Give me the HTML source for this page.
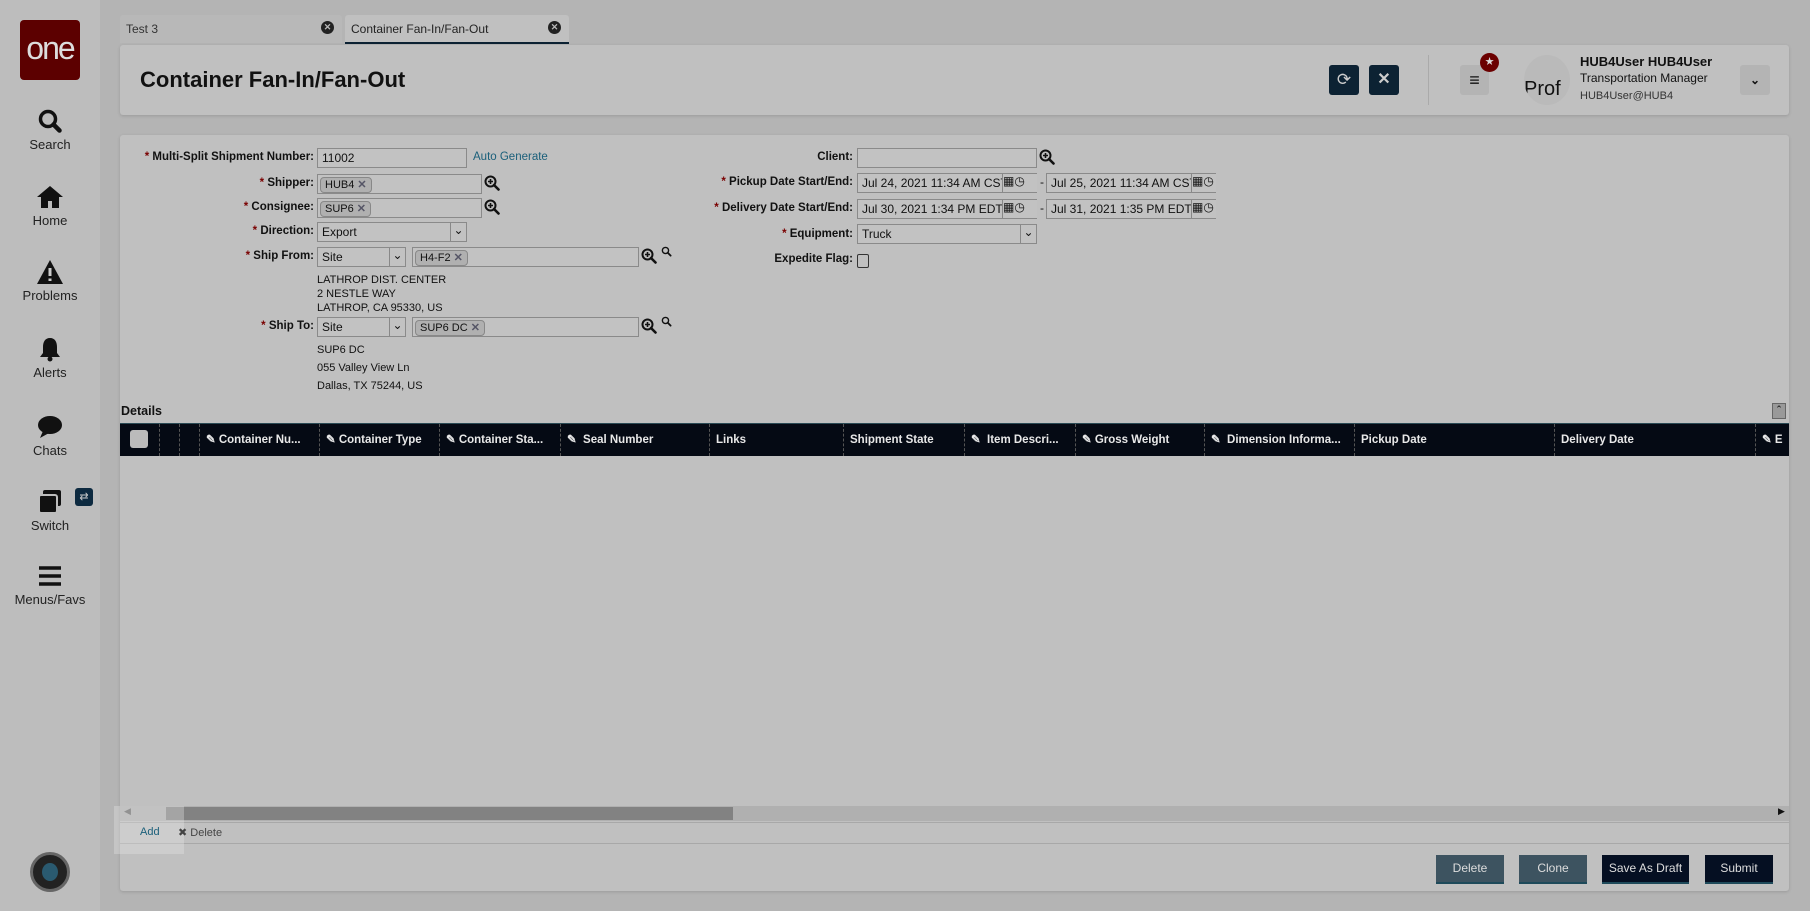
<!DOCTYPE html>
<html><head><meta charset="utf-8"><style>
*{box-sizing:border-box;margin:0;padding:0}
body{width:1810px;height:911px;background:#b4b4b4;font-family:"Liberation Sans",sans-serif;font-size:12px;color:#111;position:relative;overflow:hidden}
.a{position:absolute}
.side{left:0;top:0;width:100px;height:911px;background:#bdbdbd}
.nav{left:0;width:100px;text-align:center;font-size:13px;color:#222}
.nav svg{display:block;margin:0 auto 3px}
.panel{background:#c0c0c0;border-radius:3px;box-shadow:0 1px 3px rgba(0,0,0,.15)}
.lbl{text-align:right;font-weight:bold;font-size:11.5px;width:300px}
.lbl b{color:#7a0000}
.in{border:1px solid #8a8a8a;background:#c2c2c2;height:20px;font-size:12px;padding:2px 4px;line-height:15px}
.chip{display:inline-block;border:1px solid #888;border-radius:4px;background:#b0b0b0;padding:0 4px;font-size:11px;line-height:14px;margin-top:1px}
.chip i{font-style:normal;color:#556;font-weight:bold;margin-left:3px}
.th{position:absolute;top:0;height:32px;line-height:32px;color:#e8e8e8;font-weight:bold;font-size:11.5px;border-left:1px dashed #555;padding-left:6px;white-space:nowrap;overflow:hidden}
.btn{height:29px;line-height:27px;text-align:center;color:#ddd;font-size:12px;border-bottom:2px solid #1e4a5a}
</style></head><body>
<svg width="0" height="0" style="position:absolute"><defs>
<symbol id="zp" viewBox="0 0 16 16"><circle cx="6.5" cy="6.5" r="5" fill="none" stroke="#111" stroke-width="2"/><path d="M10 10l4.5 4.5" stroke="#111" stroke-width="2.6" stroke-linecap="round"/><path d="M6.5 4v5M4 6.5h5" stroke="#111" stroke-width="1.6"/></symbol>
<symbol id="zs" viewBox="0 0 16 16"><circle cx="6.5" cy="6.5" r="4.5" fill="none" stroke="#111" stroke-width="2"/><path d="M10 10l4 4" stroke="#111" stroke-width="2.6" stroke-linecap="round"/></symbol>
</defs></svg>
<div class="a side"></div>
<div class="a" style="left:20px;top:20px;width:60px;height:60px;background:#5c0000;border-radius:4px;color:#ddd;font-size:32px;text-align:center;line-height:56px;letter-spacing:-2px">one</div>
<div class="a nav" style="top:108px"><svg width="26" height="26" viewBox="0 0 26 26"><circle cx="11" cy="11" r="7.5" fill="none" stroke="#111" stroke-width="3.5"/><path d="M16.5 16.5l6 6" stroke="#111" stroke-width="4.5" stroke-linecap="round"/></svg>Search</div>
<div class="a nav" style="top:184px"><svg width="28" height="26" viewBox="0 0 28 26"><path d="M14 2L1 13h4v11h7v-7h4v7h7V13h4z" fill="#111"/></svg>Home</div>
<div class="a nav" style="top:259px"><svg width="28" height="26" viewBox="0 0 28 26"><path d="M14 1L1 25h26z" fill="#111"/><path d="M14 9v8M14 19.5v2.5" stroke="#ccc" stroke-width="3"/></svg>Problems</div>
<div class="a nav" style="top:336px"><svg width="26" height="26" viewBox="0 0 26 26"><path d="M13 2c-5 0-7 4-7 9v6l-3 4h20l-3-4v-6c0-5-2-9-7-9z" fill="#111"/><circle cx="13" cy="23" r="2.5" fill="#111"/></svg>Alerts</div>
<div class="a nav" style="top:414px"><svg width="28" height="26" viewBox="0 0 28 26"><ellipse cx="14" cy="11" rx="12" ry="9" fill="#111"/><path d="M7 17l-3 7 9-5z" fill="#111"/></svg>Chats</div>
<div class="a nav" style="top:489px"><svg width="28" height="26" viewBox="0 0 28 26"><rect x="7" y="1" width="18" height="16" rx="2" fill="#111"/><rect x="3" y="6" width="18" height="18" rx="2" fill="#111" stroke="#bdbdbd" stroke-width="2"/></svg>Switch</div>
<div class="a" style="left:75px;top:488px;width:18px;height:18px;background:#0d2a40;border-radius:3px;color:#ccc;font-size:11px;text-align:center;line-height:18px">⇄</div>
<div class="a nav" style="top:563px"><svg width="26" height="26" viewBox="0 0 26 26"><path d="M2 5h22M2 13h22M2 21h22" stroke="#111" stroke-width="3.5"/></svg>Menus/Favs</div>
<div class="a" style="left:30px;top:852px;width:40px;height:40px;border-radius:50%;background:#222;border:3px solid #666"><div style="margin:8px auto;width:16px;height:18px;border-radius:50%;background:#2a5a70"></div></div>

<div class="a" style="left:120px;top:15px;width:222px;height:28px;background:#b8b8b8;border-radius:3px 3px 0 0;padding:7px 6px;font-size:12px;color:#333">Test 3<span style="position:absolute;right:8px;top:6px;width:13px;height:13px;border-radius:50%;background:#222;color:#bbb;font-size:9px;text-align:center;line-height:13px;font-weight:bold">✕</span></div>
<div class="a" style="left:345px;top:15px;width:224px;height:29px;background:#c0c0c0;border-radius:3px 3px 0 0;border-bottom:2px solid #0c2233;padding:7px 6px;font-size:12px;color:#222">Container Fan-In/Fan-Out<span style="position:absolute;right:8px;top:6px;width:13px;height:13px;border-radius:50%;background:#222;color:#bbb;font-size:9px;text-align:center;line-height:13px;font-weight:bold">✕</span></div>

<div class="a panel" style="left:120px;top:45px;width:1669px;height:70px"></div>
<div class="a" style="left:140px;top:67px;font-size:22px;font-weight:bold;color:#111">Container Fan-In/Fan-Out</div>
<div class="a" style="left:1329px;top:65px;width:30px;height:30px;background:#0c2233;border-radius:3px;color:#ccc;text-align:center;line-height:30px;font-size:17px">⟳</div>
<div class="a" style="left:1369px;top:65px;width:30px;height:30px;background:#0c2233;border-radius:3px;color:#ccc;text-align:center;line-height:30px;font-size:16px;font-weight:bold">✕</div>
<div class="a" style="left:1428px;top:55px;width:1px;height:50px;background:#aaa"></div>
<div class="a" style="left:1460px;top:65px;width:29px;height:30px;background:#b4b4b4;border-radius:3px;text-align:center;line-height:30px;font-size:18px;font-weight:bold">≡</div>
<div class="a" style="left:1480px;top:53px;width:19px;height:19px;background:#6b0000;border-radius:50%;color:#ddd;font-size:11px;text-align:center;line-height:19px">★</div>
<div class="a" style="left:1524px;top:55px;width:46px;height:50px;background:#bababa;border-radius:50%;overflow:hidden;font-size:20px;padding-top:23px;color:#111">Prof</div>
<div class="a" style="left:1580px;top:54px;font-size:13px;font-weight:bold;line-height:16px">HUB4User HUB4User<br><span style="font-weight:normal;font-size:12px;line-height:17px">Transportation Manager</span><br><span style="font-weight:normal;font-size:11px;color:#333">HUB4User@HUB4</span></div>
<div class="a" style="left:1740px;top:65px;width:30px;height:30px;background:#b4b4b4;border-radius:3px;text-align:center;line-height:30px;font-size:12px;font-weight:bold">⌄</div>

<div class="a panel" style="left:120px;top:135px;width:1669px;height:756px"></div>

<div class="a lbl" style="left:14px;top:151px"><b>*</b> Multi-Split Shipment Number:</div>
<div class="a in" style="left:317px;top:148px;width:150px">11002</div>
<div class="a" style="left:473px;top:151px;color:#1a5f7a;font-size:11.5px">Auto Generate</div>
<div class="a lbl" style="left:14px;top:177px"><b>*</b> Shipper:</div>
<div class="a in" style="left:317px;top:174px;width:165px;padding:1px 2px"><span class="chip">HUB4<i>✕</i></span></div>
<svg class="a" style="left:484px;top:175px" width="16" height="16"><use href="#zp"/></svg>
<div class="a lbl" style="left:14px;top:201px"><b>*</b> Consignee:</div>
<div class="a in" style="left:317px;top:198px;width:165px;padding:1px 2px"><span class="chip">SUP6<i>✕</i></span></div>
<svg class="a" style="left:484px;top:199px" width="16" height="16"><use href="#zp"/></svg>
<div class="a lbl" style="left:14px;top:225px"><b>*</b> Direction:</div>
<div class="a in" style="left:317px;top:222px;width:150px">Export<span style="position:absolute;right:0;top:0;width:16px;height:18px;border-left:1px solid #888;text-align:center">⌄</span></div>
<div class="a lbl" style="left:14px;top:250px"><b>*</b> Ship From:</div>
<div class="a in" style="left:317px;top:247px;width:89px">Site<span style="position:absolute;right:0;top:0;width:16px;height:18px;border-left:1px solid #888;text-align:center">⌄</span></div>
<div class="a in" style="left:412px;top:247px;width:227px;padding:1px 2px"><span class="chip">H4-F2<i>✕</i></span></div>
<svg class="a" style="left:641px;top:248px" width="16" height="16"><use href="#zp"/></svg><svg class="a" style="left:661px;top:246px" width="11" height="11"><use href="#zs"/></svg>
<div class="a" style="left:317px;top:273px;font-size:11px;line-height:14px">LATHROP DIST. CENTER<br>2 NESTLE WAY<br>LATHROP, CA 95330, US</div>
<div class="a lbl" style="left:14px;top:320px"><b>*</b> Ship To:</div>
<div class="a in" style="left:317px;top:317px;width:89px">Site<span style="position:absolute;right:0;top:0;width:16px;height:18px;border-left:1px solid #888;text-align:center">⌄</span></div>
<div class="a in" style="left:412px;top:317px;width:227px;padding:1px 2px"><span class="chip">SUP6 DC<i>✕</i></span></div>
<svg class="a" style="left:641px;top:318px" width="16" height="16"><use href="#zp"/></svg><svg class="a" style="left:661px;top:316px" width="11" height="11"><use href="#zs"/></svg>
<div class="a" style="left:317px;top:343px;font-size:11px;line-height:14px">SUP6 DC<br><span style="line-height:22px">055 Valley View Ln</span><br>Dallas, TX 75244, US</div>

<div class="a lbl" style="left:553px;top:151px">Client:</div>
<div class="a in" style="left:857px;top:148px;width:180px"></div>
<svg class="a" style="left:1039px;top:149px" width="16" height="16"><use href="#zp"/></svg>
<div class="a lbl" style="left:553px;top:176px"><b>*</b> Pickup Date Start/End:</div>
<div class="a in" style="left:857px;top:173px;width:180px;overflow:hidden;white-space:nowrap">Jul 24, 2021 11:34 AM CST</div>
<div class="a" style="left:1040px;top:175px">-</div>
<div class="a in" style="left:1046px;top:173px;width:170px;overflow:hidden;white-space:nowrap">Jul 25, 2021 11:34 AM CST</div>
<div class="a lbl" style="left:553px;top:202px"><b>*</b> Delivery Date Start/End:</div>
<div class="a in" style="left:857px;top:199px;width:180px;overflow:hidden;white-space:nowrap">Jul 30, 2021 1:34 PM EDT</div>
<div class="a" style="left:1040px;top:201px">-</div>
<div class="a in" style="left:1046px;top:199px;width:170px;overflow:hidden;white-space:nowrap">Jul 31, 2021 1:35 PM EDT</div>
<div class="a" style="left:1002px;top:174px;width:35px;height:18px;background:#c2c2c2;border-left:1px solid #888;font-size:12px">▦◷</div>
<div class="a" style="left:1191px;top:174px;width:25px;height:18px;background:#c2c2c2;border-left:1px solid #888;font-size:12px;overflow:hidden">▦◷</div>
<div class="a" style="left:1002px;top:200px;width:35px;height:18px;background:#c2c2c2;border-left:1px solid #888;font-size:12px">▦◷</div>
<div class="a" style="left:1191px;top:200px;width:25px;height:18px;background:#c2c2c2;border-left:1px solid #888;font-size:12px;overflow:hidden">▦◷</div>
<div class="a lbl" style="left:553px;top:228px"><b>*</b> Equipment:</div>
<div class="a in" style="left:857px;top:224px;width:180px">Truck<span style="position:absolute;right:0;top:0;width:16px;height:18px;border-left:1px solid #888;text-align:center">⌄</span></div>
<div class="a lbl" style="left:553px;top:253px">Expedite Flag:</div>
<div class="a" style="left:857px;top:254px;width:12px;height:14px;border:1px solid #333;border-radius:2px"></div>

<div class="a" style="left:121px;top:404px;font-weight:bold;font-size:12.5px">Details</div>
<div class="a" style="left:1772px;top:403px;width:14px;height:16px;background:#999;border:1px solid #666;font-size:9px;text-align:center">⌃</div>
<div class="a" style="left:120px;top:423px;width:1669px;height:33px;background:#050a14;border-top:1px solid #2a4a55;overflow:hidden">
<div class="a" style="left:10px;top:6px;width:18px;height:18px;background:#bbb;border-radius:3px"></div>
<div class="th" style="left:39px;width:20px"></div>
<div class="th" style="left:59px;width:20px"></div>
<div class="th" style="left:79px;width:120px">✎ Container Nu...</div>
<div class="th" style="left:199px;width:120px">✎ Container Type</div>
<div class="th" style="left:319px;width:121px">✎ Container Sta...</div>
<div class="th" style="left:440px;width:149px">✎ &nbsp;Seal Number</div>
<div class="th" style="left:589px;width:134px">Links</div>
<div class="th" style="left:723px;width:121px">Shipment State</div>
<div class="th" style="left:844px;width:111px">✎ &nbsp;Item Descri...</div>
<div class="th" style="left:955px;width:129px">✎ Gross Weight</div>
<div class="th" style="left:1084px;width:150px">✎ &nbsp;Dimension Informa...</div>
<div class="th" style="left:1234px;width:200px">Pickup Date</div>
<div class="th" style="left:1434px;width:201px">Delivery Date</div>
<div class="th" style="left:1635px;width:40px">✎ E</div>
</div>
<div class="a" style="left:120px;top:806px;width:1669px;height:15px;background:#b0b0b0"></div>
<div class="a" style="left:166px;top:807px;width:567px;height:13px;background:#828282"></div>
<div class="a" style="left:1778px;top:806px;font-size:9px">▶</div>
<div class="a" style="left:124px;top:806px;font-size:9px;color:#666">◀</div>
<div class="a" style="left:120px;top:822px;width:1669px;height:1px;background:#a8a8a8"></div>
<div class="a" style="left:120px;top:843px;width:1669px;height:1px;background:#a8a8a8"></div>
<div class="a" style="left:114px;top:806px;width:70px;height:48px;background:#e6e6e6;opacity:.35"></div>
<div class="a" style="left:140px;top:826px;color:#1a5f7a;font-size:11px">Add</div>
<div class="a" style="left:178px;top:826px;color:#444;font-size:11px">✖ Delete</div>
<div class="a btn" style="left:1436px;top:855px;width:68px;background:#3d5360">Delete</div>
<div class="a btn" style="left:1519px;top:855px;width:68px;background:#3d5360">Clone</div>
<div class="a btn" style="left:1602px;top:855px;width:87px;background:#050f22;color:#ddd">Save As Draft</div>
<div class="a btn" style="left:1705px;top:855px;width:68px;background:#050f22">Submit</div>
</body></html>
